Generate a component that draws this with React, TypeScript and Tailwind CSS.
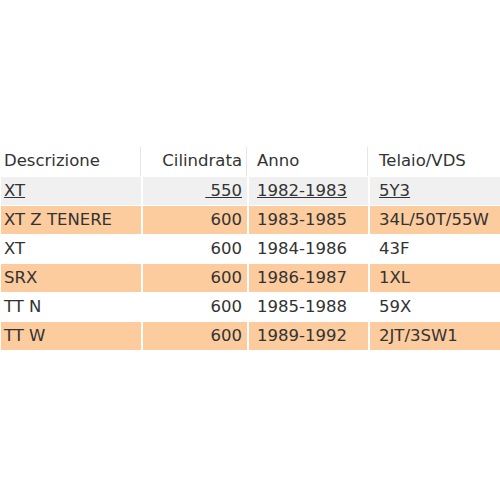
const rows = [
  { d: 'XT', c: '\u00a0550', a: '1982-1983', t: '5Y3', bg: 'bg-[#f0f0f0]', link: true },
  { d: 'XT Z TENERE', c: '600', a: '1983-1985', t: '34L/50T/55W', bg: 'bg-[#fccb9e]' },
  { d: 'XT', c: '600', a: '1984-1986', t: '43F', bg: 'bg-white' },
  { d: 'SRX', c: '600', a: '1986-1987', t: '1XL', bg: 'bg-[#fccb9e]' },
  { d: 'TT N', c: '600', a: '1985-1988', t: '59X', bg: 'bg-white' },
  { d: 'TT W', c: '600', a: '1989-1992', t: '2JT/3SW1', bg: 'bg-[#fccb9e]' },
]

export default function App() {
  return (
    <div
      className="w-[500px] h-[500px] overflow-hidden bg-white text-[16.5px] text-[#333] pt-[147px] pl-px"
      style={{ fontFamily: '"DejaVu Sans", sans-serif' }}
    >
      <div className="w-[520px] grid grid-cols-[140px_104px_119px_1fr] gap-x-[2px] gap-y-[1px]">
        {/* header */}
        <div className="h-[29px] flex items-center px-[3px] border-r border-[#e6e6e6]">Descrizione</div>
        <div className="h-[29px] flex items-center justify-end px-[4px] border-r border-[#e6e6e6]">Cilindrata</div>
        <div className="h-[29px] flex items-center px-[8px] border-r border-[#e6e6e6]">Anno</div>
        <div className="h-[29px] flex items-center px-[9px]">Telaio/VDS</div>

        {rows.map((r, i) => (
          <div key={i} className="contents">
            <div className={`${r.bg} h-[28px] flex items-center px-[3px] ${r.link ? 'underline' : ''}`}>{r.d}</div>
            <div className={`${r.bg} h-[28px] flex items-center justify-end px-[5px] ${r.link ? 'underline' : ''}`}>{r.c}</div>
            <div className={`${r.bg} h-[28px] flex items-center px-[8px] ${r.link ? 'underline' : ''}`}>{r.a}</div>
            <div className={`${r.bg} h-[28px] flex items-center px-[9px] ${r.link ? 'underline' : ''}`}>{r.t}</div>
          </div>
        ))}
      </div>
    </div>
  )
}
